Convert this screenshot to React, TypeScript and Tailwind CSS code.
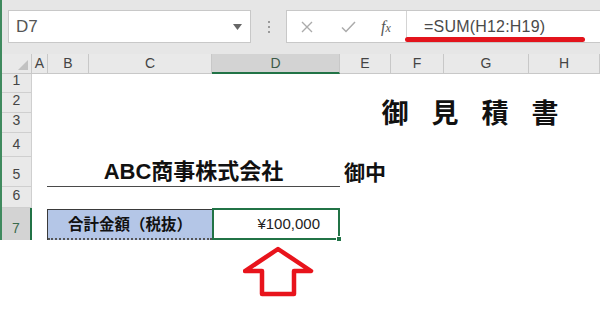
import React from "react";

const ui = "font-['Liberation_Sans',Arial,sans-serif]";
const jp = "font-['Liberation_Sans','Noto_Sans_CJK_JP',sans-serif]";

const columns = ["A", "B", "C", "D", "E", "F", "G", "H"];
const rowNumbers = [1, 2, 3, 4, 5, 6, 7];

function Toolbar() {
  return (
    <div className="relative flex h-[54px] items-start bg-[#e6e6e6] pt-[10px]">
      {/* name box */}
      <div className="ml-[6px] flex h-[33px] w-[243px] items-center justify-between border border-[#c8c8c8] bg-white pl-[7px] pr-[8px]">
        <span className="text-[17px] text-[#555]">D7</span>
        <svg width="9" height="6" viewBox="0 0 9 6">
          <path d="M0 0 H9 L4.5 6 Z" fill="#666" />
        </svg>
      </div>
      {/* separator dots */}
      <div className="flex h-[33px] w-[35px] flex-col items-center justify-center gap-[3px]">
        <span className="h-[2px] w-[2px] bg-[#9a9a9a]" />
        <span className="h-[2px] w-[2px] bg-[#9a9a9a]" />
        <span className="h-[2px] w-[2px] bg-[#9a9a9a]" />
      </div>
      {/* formula bar */}
      <div className="flex h-[33px] flex-1 border border-r-0 border-[#c8c8c8] bg-white">
        <div className="flex w-[120px] items-center border-r border-[#d4d4d4]">
          <div className="flex w-[40px] justify-center">
            <svg width="12" height="12" viewBox="0 0 12 12">
              <path d="M1 1 L11 11 M11 1 L1 11" stroke="#ababab" strokeWidth="1.4" />
            </svg>
          </div>
          <div className="flex w-[42px] justify-center">
            <svg width="15" height="12" viewBox="0 0 15 12">
              <path d="M1 6.5 L5 10.5 L14 1" stroke="#ababab" strokeWidth="1.5" fill="none" />
            </svg>
          </div>
          <div className="flex w-[34px] items-baseline justify-center font-['Liberation_Serif',serif] italic leading-none text-[#555]">
            <span className="text-[16px]">f</span>
            <span className="text-[12px]">x</span>
          </div>
        </div>
        <div className="flex items-center pl-[17px] text-[16px] tracking-[0.2px] text-[#4a4a4a]">
          =SUM(H12:H19)
        </div>
      </div>
      {/* red annotation under the formula */}
      <div className="absolute left-[403px] top-[37px] h-[5px] w-[180px] rounded-full bg-[#e3141c]" />
    </div>
  );
}

function Sheet() {
  return (
    <div className="grid grid-cols-[30px_16px_41px_123px_128px_51px_53px_85px_1fr] grid-rows-[20px_19px_20px_20px_24px_30px_21px_32px]">
      {/* corner */}
      <div className="flex items-end justify-end border-b border-r border-[#c8c8c8] bg-[#e9e9e9] pb-[3px] pr-[3px]">
        <svg width="10" height="10" viewBox="0 0 10 10">
          <path d="M10 0 V10 H0 Z" fill="#c2c2c2" />
        </svg>
      </div>
      {columns.map((c) => {
        const active = c === "D";
        return (
          <div
            key={c}
            className={`flex items-center justify-center border-r text-[14px] ${
              active
                ? "border-b-2 border-r-[#c8c8c8] border-b-[#217346] bg-[#d3d3d3] text-[#3c5a48]"
                : "border-b border-[#c8c8c8] bg-[#e9e9e9] text-[#444]"
            }`}
          >
            {c}
          </div>
        );
      })}

      {/* row headers */}
      {rowNumbers.map((n) => {
        const active = n === 7;
        return (
          <div
            key={n}
            style={{ gridRowStart: n + 1 }}
            className={`col-start-1 flex items-end justify-center pb-[1px] text-[14px] ${
              active
                ? "border-r-2 border-[#217346] bg-[#d3d3d3] text-[#3a6a4c]"
                : "border-b border-r border-[#cfcfcf] bg-[#e9e9e9] text-[#444]"
            }`}
          >
            {n}
          </div>
        );
      })}

      {/* title */}
      <div className="col-start-6 col-span-4 row-start-3 row-span-2 flex items-center justify-center gap-[23px] pt-[3px] text-[27px] font-bold text-[#111]">
        <span>御</span>
        <span>見</span>
        <span>積</span>
        <span>書</span>
      </div>

      {/* addressee */}
      <div className="col-start-3 col-span-3 row-start-6 -ml-[1px] flex items-end justify-center border-b-[1.5px] border-[#4a4a4a] pb-[1px] text-[22px] font-bold leading-[26px] text-[#111]">
        ABC商事株式会社
      </div>
      <div className="col-start-6 row-start-6 flex items-end whitespace-nowrap pb-[1px] pl-[4px] text-[21px] font-bold leading-[26px] text-[#111]">
        御中
      </div>

      {/* total row */}
      <div className="col-start-3 col-span-2 row-start-8 -ml-[1px] mt-[1px] flex flex-col border-l border-t border-[#3a3a3a] bg-[#b4c6e7]">
        <div className="flex flex-1 items-center justify-center pt-[1px] text-[15.5px] font-bold text-[#111]">
          合計金額（税抜）
        </div>
        <div className="border-b-2 border-dotted border-[#555]" />
      </div>
      <div className="relative col-start-5 row-start-8 flex items-center justify-end border-2 border-[#217346] bg-white pr-[18px] text-[15px] text-[#222]">
        ¥100,000
        <span className="absolute -bottom-[4px] -right-[4px] h-[6px] w-[6px] border border-white bg-[#217346]" />
      </div>
    </div>
  );
}

function UpArrow() {
  return (
    <div className="pl-[243px] pt-[6px]">
      <svg width="72" height="52" viewBox="0 0 72 52">
        <path
          d="M35 3 L68 25 L51 25 L51 48 L19 48 L19 25 L2 25 Z"
          fill="white"
          stroke="#e8141c"
          strokeWidth="4.5"
          strokeLinejoin="round"
        />
      </svg>
    </div>
  );
}

export default function App() {
  return (
    <div className={`h-[326px] w-[600px] overflow-hidden bg-white ${jp}`}>
      <div className={`border-l-2 border-[#3f8a5e] ${ui}`}>
        <Toolbar />
        <div className={jp}>
          <Sheet />
        </div>
      </div>
      <UpArrow />
    </div>
  );
}
